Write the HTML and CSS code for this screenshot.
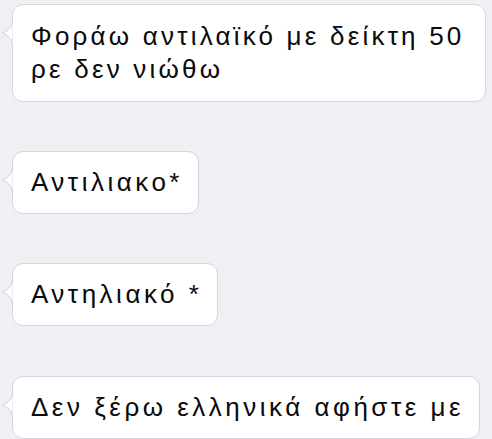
FILE: index.html
```html
<!DOCTYPE html>
<html lang="el">
<head>
<meta charset="utf-8">
<link rel="stylesheet" href="styles.css">
</head>
<body>
<div class="chat">
  <div class="bubble b1">
    <svg class="tail" width="11" height="28" viewBox="0 0 11 28"><path d="M10.5,0 C10.5,8 7,11 0.5,14 C7,17 10.5,20 10.5,28" fill="#fff" stroke="#d3d3d8" stroke-width="1"/></svg>
    Φοράω αντιλαϊκό με δείκτη 50 ρε δεν νιώθω
  </div>
  <div class="bubble b2">
    <svg class="tail" width="11" height="28" viewBox="0 0 11 28"><path d="M10.5,0 C10.5,8 7,11 0.5,14 C7,17 10.5,20 10.5,28" fill="#fff" stroke="#d3d3d8" stroke-width="1"/></svg>
    Αντιλιακο*
  </div>
  <div class="bubble b3">
    <svg class="tail" width="11" height="28" viewBox="0 0 11 28"><path d="M10.5,0 C10.5,8 7,11 0.5,14 C7,17 10.5,20 10.5,28" fill="#fff" stroke="#d3d3d8" stroke-width="1"/></svg>
    Αντηλιακό *
  </div>
  <div class="bubble b4">
    <svg class="tail" width="11" height="28" viewBox="0 0 11 28"><path d="M10.5,0 C10.5,8 7,11 0.5,14 C7,17 10.5,20 10.5,28" fill="#fff" stroke="#d3d3d8" stroke-width="1"/></svg>
    Δεν ξέρω ελληνικά αφήστε με
  </div>
</div>
</body>
</html>
```
FILE: styles.css
```css
html, body {
  margin: 0;
  padding: 0;
  background: #efeff4;
}
.chat {
  display: flex;
  flex-direction: column;
  align-items: flex-start;
  padding: 4px 6px 0 12px;
  font-family: "Liberation Sans", Arial, sans-serif;
  font-size: 26px;
  line-height: 33px;
  letter-spacing: 3.5px;
  color: #0a0a0a;
}
.bubble {
  position: relative;
  background: #fff;
  border: 1px solid #d6d6db;
  border-radius: 11px;
  padding: 14px 15px 14px 18px;
}
.tail {
  position: absolute;
  left: -11px;
  top: 14px;
  display: block;
}
.b1 {
  align-self: stretch;
  padding-top: 15px;
  padding-bottom: 15px;
  letter-spacing: 3.2px;
}
.b2 { margin-top: 49px; }
.b3 { margin-top: 49px; }
.b4 { margin-top: 50px; }
```
